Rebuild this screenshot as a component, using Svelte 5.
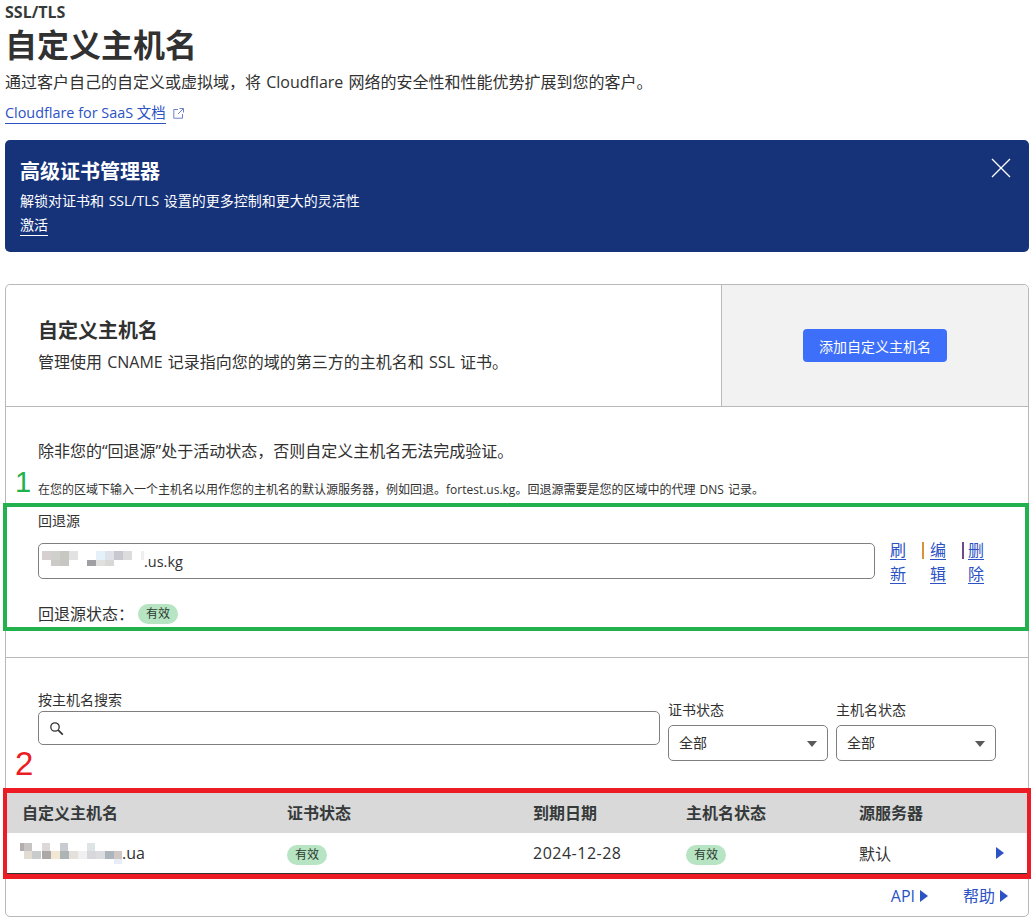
<script lang="ts">
	const columns = ['自定义主机名', '证书状态', '到期日期', '主机名状态', '源服务器']

	// mosaic squares over the hidden domain names: x, y, w, h, colour
	const blurFallback = [
		[0, 0, 9, 9, '#d6d0d0'], [9, 0, 9, 9, '#cfcfcb'], [18, 0, 9, 9, '#c8c8c2'], [27, 0, 9, 9, '#e2e2e2'],
		[9, 9, 9, 6, '#cccac6'], [18, 9, 9, 6, '#c8c6c2'], [45, 9, 9, 6, '#a0a0a4'], [54, 9, 9, 6, '#e0e0de'],
		[54, 0, 9, 9, '#e4f0fa'], [63, 0, 9, 9, '#dfe2e8'], [72, 0, 9, 9, '#c8c8d0'], [81, 0, 9, 9, '#dcdcdc'],
		[63, 9, 9, 6, '#d8d8d8'], [99, 0, 3, 9, '#eeeeee']
	]
	const blurHost = [
		[0, 0, 4, 8, '#b4acac'], [4, 0, 8, 8, '#c8c4c4'], [22, 0, 8, 8, '#dcd8d8'], [40, 0, 8, 8, '#c8ccd0'], [67, 0, 8, 8, '#dce4e4'],
		[4, 8, 8, 8, '#e2dcd2'], [12, 8, 9, 8, '#c8cccc'], [22, 8, 9, 8, '#aca8a8'], [31, 8, 9, 8, '#f2e6d4'],
		[40, 8, 9, 8, '#acb4b4'], [49, 8, 9, 8, '#e4e0dc'], [58, 8, 9, 8, '#f0f0f0'], [67, 8, 9, 8, '#d8d8dc'],
		[76, 8, 9, 8, '#dcdce0'], [85, 8, 9, 8, '#acb4bc'], [94, 8, 8, 8, '#d0c8c4'], [94, 16, 8, 5, '#e8ecf4']
	]
</script>

<div class="page">
	<header class="top">
		<div class="crumb">SSL/TLS</div>
		<h1>自定义主机名</h1>
		<p class="lead">通过客户自己的自定义或虚拟域，将 Cloudflare 网络的安全性和性能优势扩展到您的客户。</p>
		<p class="doc">
			<a href="#doc">Cloudflare for SaaS 文档</a>
			<svg width="11" height="11" viewBox="0 0 11 11" fill="none" stroke="#6f82c8" stroke-width="1">
				<path d="M5 1.5H.8v8.7h8.7V6" />
				<path d="M6.5.5h4v4M10.3.7 5 6" />
			</svg>
		</p>
	</header>

	<section class="banner">
		<h2>高级证书管理器</h2>
		<p>解锁对证书和 SSL/TLS 设置的更多控制和更大的灵活性</p>
		<a href="#on">激活</a>
		<button class="close" aria-label="关闭">
			<svg width="20" height="20" viewBox="0 0 20 20" stroke="#fff" stroke-width="1.3">
				<path d="M1 1l18 18M19 1 1 19" />
			</svg>
		</button>
	</section>

	<section class="card">
		<div class="head">
			<div class="head-text">
				<h3>自定义主机名</h3>
				<p>管理使用 CNAME 记录指向您的域的第三方的主机名和 SSL 证书。</p>
			</div>
			<div class="head-action">
				<button class="primary">添加自定义主机名</button>
			</div>
		</div>

		<div class="fallback">
			<p class="notice">除非您的“回退源”处于活动状态，否则自定义主机名无法完成验证。</p>
			<p class="hint">在您的区域下输入一个主机名以用作您的主机名的默认源服务器，例如回退。fortest.us.kg。回退源需要是您的区域中的代理 DNS 记录。</p>
			<div class="mark-num green-num">1</div>
			<div class="fallback-box">
				<div class="lbl">回退源</div>
				<div class="fallback-row">
					<div class="input value">
						<svg class="blur" width="102" height="21" viewBox="0 0 102 21">
							{#each blurFallback as [x, y, w, h, c]}
								<rect {x} {y} width={w} height={h} fill={c as string} />
							{/each}
						</svg>
						<span>.us.kg</span>
					</div>
					<div class="actions">
						<a href="#r">刷新</a>
						<i class="sep orange"></i>
						<a href="#e">编辑</a>
						<i class="sep dark"></i>
						<a href="#d">删除</a>
					</div>
				</div>
				<div class="status">
					<span>回退源状态：</span>
					<span class="badge">有效</span>
				</div>
			</div>
		</div>

		<div class="list">
			<div class="filters">
				<div class="search">
					<div class="lbl">按主机名搜索</div>
					<div class="input search-box">
						<svg width="15" height="15" viewBox="0 0 15 15" fill="none" stroke="#333" stroke-width="1.3">
							<circle cx="6" cy="6" r="4.2" />
							<path d="M9.2 9.2l4.6 4.4" stroke-width="1.7" />
						</svg>
					</div>
				</div>
				<div class="pick">
					<div class="lbl">证书状态</div>
					<div class="input select">全部<i class="caret"></i></div>
				</div>
				<div class="pick">
					<div class="lbl">主机名状态</div>
					<div class="input select">全部<i class="caret"></i></div>
				</div>
			</div>

			<div class="mark-num red-num">2</div>
			<div class="table-box">
				<div class="row th">
					{#each columns as col}
						<div>{col}</div>
					{/each}
				</div>
				<div class="row td">
					<div class="host">
						<svg class="blur" width="102" height="21" viewBox="0 0 102 21">
							{#each blurHost as [x, y, w, h, c]}
								<rect {x} {y} width={w} height={h} fill={c as string} />
							{/each}
						</svg>
						<span>.ua</span>
					</div>
					<div><span class="badge">有效</span></div>
					<div class="date">2024-12-28</div>
					<div><span class="badge">有效</span></div>
					<div class="origin">默认<i class="tri"></i></div>
				</div>
			</div>

			<div class="foot">
				<a href="#api">API<i class="tri"></i></a>
				<a href="#help">帮助<i class="tri"></i></a>
			</div>
		</div>
	</section>
</div>

<style>
	:global(body) {
		margin: 0;
		background: #fff;
		color: #313131;
		font-family: "Open Sans", "Noto Sans CJK SC", sans-serif;
		word-spacing: 1px;
	}

	.page { width: 1024px; margin-left: 5px; padding-bottom: 5px; }

	h1, h2, h3, p { margin: 0; }
	a { color: #2c52c4; }

	.crumb { font-size: 16px; font-weight: 700; line-height: 20px; padding-top: 2px; color: #36393a; }
	h1 { font-size: 32px; line-height: 44px; font-weight: 700; margin-top: 1px; color: #313131; }
	.lead { font-size: 16px; line-height: 24px; margin-top: 3px; }
	.doc { font-size: 14.4px; line-height: 20px; margin-top: 9px; display: flex; align-items: center; gap: 7px; word-spacing: 0; }
	.doc a { text-decoration: none; border-bottom: 1px solid #2c52c4; }

	.banner {
		position: relative;
		margin-top: 16px;
		height: 112px;
		box-sizing: border-box;
		padding: 18px 15px 0;
		background: #163379;
		border-radius: 5px;
		color: #fff;
	}
	.banner h2 { font-size: 20px; line-height: 28px; font-weight: 700; }
	.banner p { font-size: 14px; line-height: 20px; margin-top: 5px; }
	.banner a { display: inline-block; color: #fff; font-size: 14px; line-height: 20px; margin-top: 4px; text-decoration: none; border-bottom: 1px solid #fff; }
	.close { position: absolute; top: 18px; right: 18px; padding: 0; border: 0; background: none; line-height: 0; }

	.card {
		margin-top: 32px;
		border: 1px solid #b9b9b9;
		border-radius: 5px;
	}

	.head { display: flex; height: 121px; border-bottom: 1px solid #b9b9b9; }
	.head-text { width: 716px; box-sizing: border-box; padding: 32px 0 0 32px; border-right: 1px solid #b9b9b9; }
	.head-text h3 { font-size: 20px; line-height: 28px; font-weight: 700; }
	.head-text p { font-size: 16px; line-height: 24px; margin-top: 5px; }
	.head-action { flex: 1; display: flex; align-items: center; justify-content: center; background: #f2f2f2; border-top-right-radius: 5px; }
	.primary {
		width: 144px; height: 33px; padding: 0;
		background: #3e6ffb; color: #fff; border: 0; border-radius: 4px;
		font: inherit; font-size: 14px;
	}

	.fallback { padding: 32px 32px 0; border-bottom: 1px solid #b9b9b9; height: 251px; box-sizing: border-box; position: relative; }
	.notice { font-size: 16px; line-height: 24px; }
	.hint { font-size: 12px; line-height: 18px; margin-top: 18px; white-space: nowrap; }

	.mark-num { position: absolute; left: 9px; font-family: "Liberation Sans", sans-serif; line-height: 32px; }
	.green-num { top: 59px; font-size: 29px; color: #22b14c; }
	.red-num { top: 90px; font-size: 33px; color: #ed1c24; }

	.fallback-box {
		margin: 4px -33px 0 -35px;
		height: 128px;
		box-sizing: border-box;
		padding: 4px 31px 0;
		border: 4px solid #22b14c;
	}
	.lbl { font-size: 14px; line-height: 20px; }
	.fallback-row { display: flex; gap: 15px; margin-top: 12px; }
	.input { border: 1px solid #7f7f7f; border-radius: 5px; box-sizing: border-box; background: #fff; }
	.value { flex: none; width: 837px; height: 36px; display: flex; align-items: center; padding-left: 3px; font-size: 14.5px; }
	.blur { flex: none; }
	.actions { display: flex; font-size: 16px; line-height: 24px; margin-top: -5px; }
	.actions a { width: 16px; text-decoration: underline; text-underline-offset: 3px; }
	.sep { width: 2px; height: 17px; margin: 4px 6px 0 16px; }
	.orange { background: #d9913a; }
	.dark { background: #6b4a8c; margin-right: 4px; }
	.status { display: flex; align-items: center; font-size: 16px; line-height: 24px; gap: 4px; margin-top: 16px; }

	.badge {
		display: inline-block; width: 40px; height: 20px; line-height: 20px; text-align: center;
		background: #b7e4c3; border-radius: 10px; font-size: 12px; color: #2a3a2e;
	}

	.list { padding-top: 32px; position: relative; }
	.filters { display: flex; align-items: flex-start; padding-left: 32px; }
	.search { width: 622px; }
	.search-box { height: 34px; margin-top: 1px; display: flex; align-items: center; padding-left: 10px; }
	.pick { width: 160px; margin-left: 8px; padding-top: 10px; }
	.select {
		position: relative; height: 36px; margin-top: 5px; padding-left: 10px;
		font-size: 14px; line-height: 34px;
	}
	.caret {
		position: absolute; right: 10px; top: 15px;
		border-style: solid; border-width: 6px 5px 0; border-color: #5a5a5a transparent transparent;
	}

	.table-box {
		margin: 27px -3px 0;
		border: 4px solid #ed1c24;
		border-width: 5px 4px;
	}
	.row { display: grid; grid-template-columns: 265px 246px 153px 173px 1fr; padding-left: 15px; align-items: center; }
	.th { height: 40px; box-sizing: border-box; padding-bottom: 2px; background: #d9d9d9; font-size: 16px; font-weight: 700; color: #36393a; }
	.td { height: 41px; font-size: 16px; background: #fff; border-bottom: 1px solid #333; box-sizing: border-box; }
	.host { display: flex; align-items: center; margin-left: -2px; }
	.date { letter-spacing: 0.5px; }
	.origin { display: flex; justify-content: space-between; align-items: center; padding-right: 23px; }
	.tri {
		display: inline-block;
		border-style: solid; border-width: 6px 0 6px 8px; border-color: transparent transparent transparent #2c52c4;
	}

	.foot { display: flex; justify-content: flex-end; align-items: flex-start; gap: 35px; padding: 5px 20px 0 0; height: 37px; box-sizing: border-box; font-size: 16px; line-height: 24px; }
	.foot a { text-decoration: none; display: flex; align-items: center; gap: 5px; }
</style>
